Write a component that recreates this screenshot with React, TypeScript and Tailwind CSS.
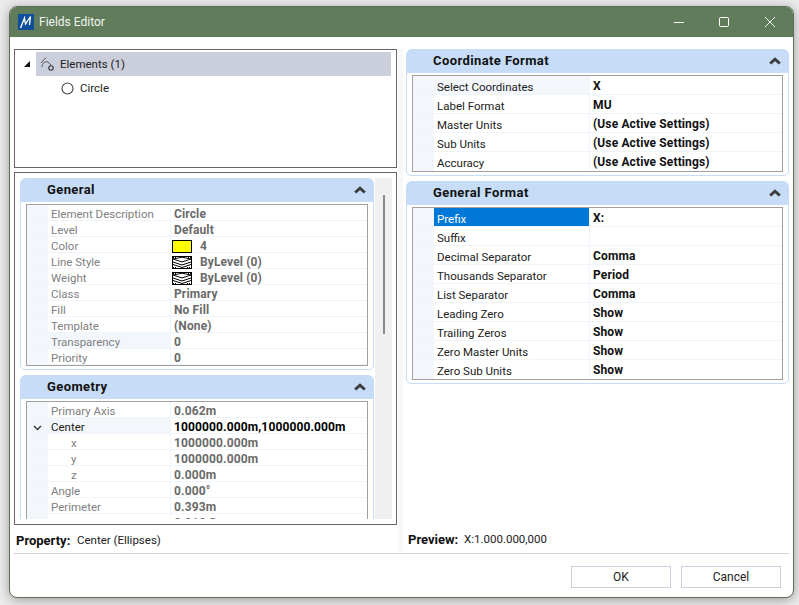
import React from "react";

const font = { fontFamily: 'Roboto, "Noto Sans", sans-serif' };

function Chevrons() {
  return (
    <svg width="12" height="8" viewBox="0 0 12 8" className="shrink-0">
      <path d="M1.2 6.5 L6 2.2 L10.8 6.5" fill="none" stroke="#3c3c3c" strokeWidth="3" />
    </svg>
  );
}

function Swatch() {
  return (
    <svg width="20" height="13" viewBox="0 0 20 13" className="shrink-0">
      <rect x="0.5" y="0.5" width="19" height="12" fill="#fff" stroke="#000" />
      <path d="M1 1.5 L4 1.5 M16 1.5 L19 1.5 M1 11.5 L5 11.5 M15 11.5 L19 11.5" stroke="#000" strokeWidth="1" strokeDasharray="1 1" />
      <path d="M1 3 L10 1.2 L19 3 L10 6 Z M1 6 L10 9 L19 6 M1 8.5 L10 11.5 L19 8.5" fill="none" stroke="#000" strokeWidth="1" />
    </svg>
  );
}

type Row = {
  l: string;
  v?: string;
  hl?: boolean;
  sel?: boolean;
  indent?: boolean;
  chev?: boolean;
  strong?: boolean;
  swatch?: "yellow" | "line";
};

function SectionHeader({ title }: { title: string }) {
  return (
    <div className="h-[23px] pl-[27px] bg-[#c6dcf7] rounded-t-[6px] flex items-center justify-between pr-[8px]">
      <span className="text-[13px] font-bold tracking-[0.4px] text-[#111]">{title}</span>
      <Chevrons />
    </div>
  );
}

function LeftRow({ r }: { r: Row }) {
  return (
    <div className="flex h-[16px] border-b border-[#f0f4fb] shrink-0">
      <div className="w-[21px] pt-[4px] bg-[#f3f7fc] flex items-center justify-center shrink-0">
        {r.chev && (
          <svg width="9" height="6" viewBox="0 0 9 6">
            <path d="M1 1 L4.5 4.5 L8 1" fill="none" stroke="#333" strokeWidth="1.4" />
          </svg>
        )}
      </div>
      <div className={`w-[123px] leading-[19px] shrink-0 border-r border-[#f0f4fb] text-[11.5px] ${r.hl ? "bg-[#f3f7fc]" : ""} ${r.indent ? "pl-[23px]" : "pl-[3px]"} ${r.strong ? "text-[#222]" : "text-[#808080]"}`}>
        {r.l}
      </div>
      <div className={`pl-[3px] pt-[4px] leading-[15px] flex items-center text-[12px] font-bold tracking-[0.13px] grow ${r.strong ? "text-black" : "text-[#6a6a6a]"}`}>
        {r.swatch === "yellow" && <span className="w-[20px] h-[13px] -ml-[2px] bg-[#ffff00] border border-black mr-[8px] shrink-0" />}
        {r.swatch === "line" && <span className="-ml-[2px] mr-[8px] flex"><Swatch /></span>}
        {r.v}
      </div>
    </div>
  );
}

function RightRow({ r }: { r: Row }) {
  return (
    <div className="flex h-[19px] border-b border-[#f0f4fb] last:border-b-0 shrink-0">
      <div className="w-[21px] bg-[#f3f7fc] shrink-0" />
      <div className={`w-[156px] shrink-0 pl-[3px] leading-[23px] border-r border-[#f0f4fb] text-[11.5px] ${r.sel ? "bg-[#0078d7] text-white" : r.hl ? "bg-[#f3f7fc] text-[#222]" : "text-[#222]"}`}>
        {r.l}
      </div>
      <div className="pl-[3px] leading-[21px] text-[12px] font-bold tracking-[0.13px] text-[#111] grow">{r.v}</div>
    </div>
  );
}

const general: Row[] = [
  { l: "Element Description", v: "Circle" },
  { l: "Level", v: "Default" },
  { l: "Color", v: "4", swatch: "yellow" },
  { l: "Line Style", v: "ByLevel (0)", swatch: "line" },
  { l: "Weight", v: "ByLevel (0)", swatch: "line" },
  { l: "Class", v: "Primary" },
  { l: "Fill", v: "No Fill" },
  { l: "Template", v: "(None)" },
  { l: "Transparency", v: "0", hl: true },
  { l: "Priority", v: "0" },
];

const geometry: Row[] = [
  { l: "Primary Axis", v: "0.062m" },
  { l: "Center", v: "1000000.000m,1000000.000m", hl: true, chev: true, strong: true },
  { l: "x", v: "1000000.000m", indent: true },
  { l: "y", v: "1000000.000m", indent: true },
  { l: "z", v: "0.000m", indent: true },
  { l: "Angle", v: "0.000°" },
  { l: "Perimeter", v: "0.393m" },
  { l: "Area", v: "0.012 Sq m" },
];

const coord: Row[] = [
  { l: "Select Coordinates", v: "X", hl: true },
  { l: "Label Format", v: "MU" },
  { l: "Master Units", v: "(Use Active Settings)" },
  { l: "Sub Units", v: "(Use Active Settings)" },
  { l: "Accuracy", v: "(Use Active Settings)" },
];

const format: Row[] = [
  { l: "Prefix", v: "X:", sel: true },
  { l: "Suffix", v: "" },
  { l: "Decimal Separator", v: "Comma" },
  { l: "Thousands Separator", v: "Period" },
  { l: "List Separator", v: "Comma" },
  { l: "Leading Zero", v: "Show" },
  { l: "Trailing Zeros", v: "Show" },
  { l: "Zero Master Units", v: "Show" },
  { l: "Zero Sub Units", v: "Show" },
];

function LeftSection({ title, rows, clip }: { title: string; rows: Row[]; clip?: boolean }) {
  return (
    <div className={`flex flex-col ${clip ? "" : "mb-[5px]"}`}>
      <SectionHeader title={title} />
      <div className={`border border-[#c6dcf7] ${clip ? "border-b-0" : "rounded-b-[5px] pb-[3px]"} px-[5px] pt-[2px]`}>
        <div className={`border border-[#a0a0a0] ${clip ? "border-b-0 h-[118px] overflow-hidden" : ""} flex flex-col`}>
          {rows.map((r) => (
            <LeftRow key={r.l} r={r} />
          ))}
        </div>
      </div>
    </div>
  );
}

function RightSection({ title, rows }: { title: string; rows: Row[] }) {
  return (
    <div className="flex flex-col mb-[5px]">
      <SectionHeader title={title} />
      <div className="border border-[#c6dcf7] rounded-b-[5px] px-[5px] pt-[2px] pb-[3px]">
        <div className="border border-[#a0a0a0] flex flex-col">
          {rows.map((r) => (
            <RightRow key={r.l} r={r} />
          ))}
        </div>
      </div>
    </div>
  );
}

export default function App() {
  return (
    <div className="w-[799px] h-[605px] overflow-hidden bg-[#ececec] pl-[9px] pt-[6px]" style={font}>
      <div className="w-[785px] h-[592px] bg-white rounded-[8px] border border-[#5d6f58] overflow-hidden flex flex-col shadow-[0_2px_12px_rgba(0,0,0,0.35)]">
        <div className="h-[31px] pt-[1px] bg-[#617c5b] flex items-center shrink-0 -mt-px">
          <svg width="16" height="16" viewBox="0 0 16 16" className="ml-[8px]">
            <rect width="16" height="16" fill="#0d4f9c" />
            <path d="M2.5 14 L6.5 4 L7.5 10 L12.5 2.5 L11.5 11" fill="none" stroke="#fff" strokeWidth="1.3" />
          </svg>
          <span className="ml-[5px] text-[12px] text-[#f2f5f1]">Fields Editor</span>
          <div className="ml-auto flex items-center">
            <svg width="12" height="12" viewBox="0 0 12 12" className="mr-[33px]">
              <path d="M1 6.5 H11" stroke="#fff" strokeWidth="1" />
            </svg>
            <svg width="12" height="12" viewBox="0 0 12 12" className="mr-[34px]">
              <rect x="1.5" y="1.5" width="9" height="9" rx="1" fill="none" stroke="#fff" strokeWidth="1" />
            </svg>
            <svg width="12" height="12" viewBox="0 0 12 12" className="mr-[17px]">
              <path d="M1 1 L11 11 M11 1 L1 11" stroke="#fff" strokeWidth="0.9" />
            </svg>
          </div>
        </div>

        <div className="flex px-[4px] pt-[12px] grow min-h-0">
          <div className="w-[383px] shrink-0 flex flex-col">
            <div className="h-[119px] border border-[#666] px-[21px] pt-[2px] shrink-0">
              <div className="flex h-[24px] items-center bg-[#cbcedb] w-[355px] pl-[4px] text-[11.5px] text-[#222] relative">
                <span className="absolute -left-[12px] top-[9px] w-0 h-0 border-l-[6px] border-l-transparent border-b-[6px] border-b-[#111]" />
                <svg width="16" height="16" viewBox="0 0 16 16" className="mr-[4px]">
                  <path d="M1 7 L6 1.5 M2 11 C2 7 5 5 8 6 L11 9" fill="none" stroke="#555" strokeWidth="1" />
                  <circle cx="11" cy="12" r="2.2" fill="none" stroke="#333" strokeWidth="1.1" />
                </svg>
                <span className="pt-[2px]">Elements (1)</span>
              </div>
              <div className="flex h-[24px] items-center pl-[25px] text-[11.5px] text-[#222]">
                <svg width="13" height="13" viewBox="0 0 13 13" className="mr-[6px]">
                  <circle cx="6.5" cy="6.5" r="5.5" fill="#fff" stroke="#444" strokeWidth="1.1" />
                </svg>
                <span className="pt-[2px]">Circle</span>
              </div>
            </div>
            <div className="mt-[4px] h-[353px] border border-[#666] flex overflow-hidden shrink-0">
              <div className="w-[359px] pl-[5px] pt-[5px] shrink-0 h-[346px] overflow-hidden">
                <LeftSection title="General" rows={general} />
                <LeftSection title="Geometry" rows={geometry} clip />
              </div>
              <div className="w-[17px] h-[341px] mt-[5px] bg-[#f0f0f0] shrink-0 ml-[1px] flex justify-center">
                <div className="w-[2px] h-[139px] mt-[17px] bg-[#8a8a8a]" />
              </div>
            </div>
            <div className="flex items-center h-[29px] pt-[4px] pl-[2px] text-[11.5px] text-[#222]">
              <span className="font-bold text-[13px] text-[#111] w-[61px]">Property:</span>
              <span>Center (Ellipses)</span>
            </div>
          </div>

          <div className="w-[5px] ml-[1px] mr-[3px] bg-[#f8f8f8] shrink-0 h-[502px]" />

          <div className="w-[383px] shrink-0 flex flex-col">
            <RightSection title="Coordinate Format" rows={coord} />
            <RightSection title="General Format" rows={format} />
            <div className="mt-auto flex items-center h-[29px] pt-[3px] pl-[2px] text-[11.5px] text-[#222]">
              <span className="font-bold text-[13px] text-[#111] w-[56px]">Preview:</span>
              <span>X:1.000.000,000</span>
            </div>
          </div>
        </div>

        <div className="mx-[4px] h-px bg-[#d0d0dc] shrink-0" />
        <div className="h-[43px] flex justify-end items-start pt-[12px] pr-[12px] gap-[10px] shrink-0">
          <button className="w-[100px] h-[22px] border border-[#cfcfdd] bg-white text-[12px] text-[#222]">OK</button>
          <button className="w-[100px] h-[22px] border border-[#cfcfdd] bg-white text-[12px] text-[#222]">Cancel</button>
        </div>
      </div>
    </div>
  );
}
